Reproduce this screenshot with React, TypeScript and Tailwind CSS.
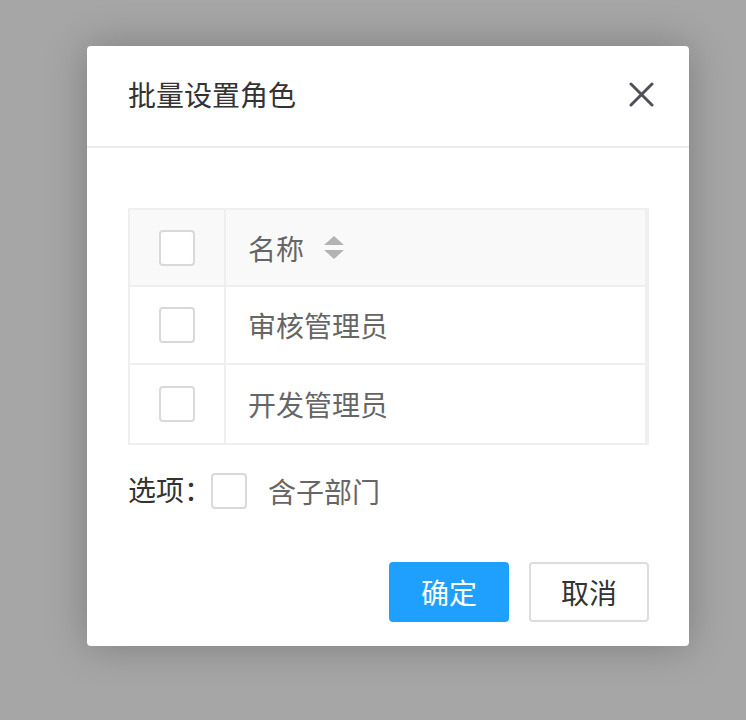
import React from "react";

const FONT = { fontFamily: '"Noto Sans CJK SC", "Noto Sans", sans-serif' };

function Box() {
  return <span className="block w-[36px] h-[36px] rounded-[4px] border-2 border-[#d9d9d9] bg-white" />;
}

function SortIcon() {
  return (
    <svg width="20" height="24" viewBox="0 0 20 24" className="ml-[20px]">
      <path d="M10 0 L20 9 L0 9 Z" fill="#b3b3b3" />
      <path d="M0 14 L20 14 L10 23 Z" fill="#b3b3b3" />
    </svg>
  );
}

const rows = ["审核管理员", "开发管理员"];

export default function App() {
  return (
    <div className="min-h-[720px] w-[746px] bg-[#a6a6a6] pt-[46px] pl-[87px]" style={FONT}>
      <div className="w-[602px] h-[600px] bg-white rounded-[4px] shadow-[0_0_40px_rgba(0,0,0,0.25)] flex flex-col">
        {/* 헤더 */}
        <div className="h-[102px] flex items-center justify-between pl-[41px] pr-[35px] pb-[4px] border-b-2 border-[#ececec]">
          <h1 className="text-[28px] leading-none text-[#333]">批量设置角色</h1>
          <svg width="25" height="25" viewBox="0 0 25 25">
            <path d="M2 2 L23 23 M23 2 L2 23" stroke="#50505a" strokeWidth="3" strokeLinecap="round" />
          </svg>
        </div>

        <div className="flex-1 flex flex-col pl-[41px] pr-[40px] pt-[60px]">
          {/* 테이블 */}
          <div className="border-2 border-r-4 border-[#efefef]">
            <div className="flex h-[77px] bg-[#f9f9f9] border-b-2 border-[#efefef]">
              <div className="w-[96px] flex items-center justify-center border-r-2 border-[#efefef]">
                <Box />
              </div>
              <div className="flex-1 flex items-center pl-[22px] text-[28px] text-[#666]">
                名称
                <SortIcon />
              </div>
            </div>
            {rows.map((name, i) => (
              <div
                key={name}
                className={`flex h-[78px] ${i < rows.length - 1 ? "border-b-2 border-[#efefef]" : ""}`}
              >
                <div className="w-[96px] flex items-center justify-center border-r-2 border-[#efefef]">
                  <Box />
                </div>
                <div className="flex-1 flex items-center pl-[22px] text-[28px] text-[#666]">{name}</div>
              </div>
            ))}
          </div>

          {/* 옵션 */}
          <div className="flex items-center mt-[28px] h-[36px]">
            <span className="text-[28px] leading-none text-[#333] -mt-[4px]">选项：</span>
            <span className="ml-[-1px]">
              <Box />
            </span>
            <span className="ml-[21px] text-[28px] leading-none text-[#666]">含子部门</span>
          </div>

          {/* 버튼 */}
          <div className="mt-auto mb-[24px] flex justify-end gap-[20px]">
            <button className="w-[120px] h-[60px] rounded-[4px] bg-[#1fa0ff] text-white text-[28px]">确定</button>
            <button className="w-[120px] h-[60px] rounded-[4px] border-2 border-[#dddddd] bg-white text-[#333] text-[28px]">
              取消
            </button>
          </div>
        </div>
      </div>
    </div>
  );
}
